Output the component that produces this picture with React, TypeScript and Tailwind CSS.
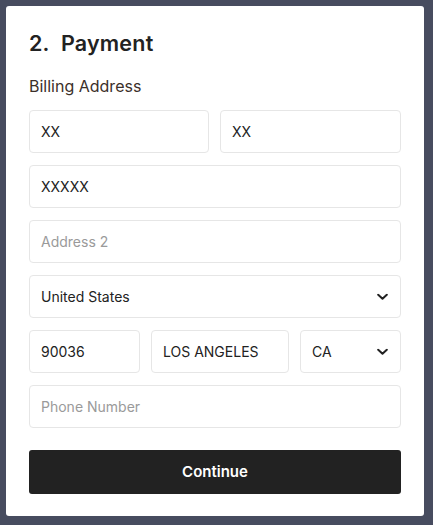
import React from "react";

function Chevron() {
  return (
    <svg width="11" height="7" viewBox="0 0 11 7" className="absolute right-[12px] top-1/2 -translate-y-1/2">
      <path d="M1.2 1.2 L5.5 5.3 L9.8 1.2" fill="none" stroke="#222" strokeWidth="2" strokeLinecap="round" strokeLinejoin="round" />
    </svg>
  );
}

function Field({ value, placeholder, select, className = "" }: { value?: string; placeholder?: string; select?: boolean; className?: string }) {
  return (
    <div className={`relative h-[43px] border border-[#e6e6e6] rounded-[4px] bg-white flex items-center pl-[11px] text-[14px] ${className}`}>
      {value ? (
        <span className="text-[#222]">{value}</span>
      ) : (
        <span className="text-[#9a9a9a]">{placeholder}</span>
      )}
      {select && <Chevron />}
    </div>
  );
}

export default function App() {
  return (
    <div className="min-h-[525px] w-[433px] bg-[#474c5f] p-[6px] pr-[9px]" style={{ fontFamily: "Inter, 'Liberation Sans', sans-serif" }}>
      <div className="bg-white rounded-[3px] px-[23px] pt-[24px] pb-[23px] h-[510px]">
        <h1 className="text-[21.5px] font-semibold text-[#222] leading-[26px] tracking-[0.2px]">
          2.&nbsp; Payment
        </h1>
        <div className="mt-[20px] text-[16px] text-[#3b2f2a] leading-[20px]">Billing Address</div>
        <div className="mt-[14px] flex flex-col gap-[12px]">
          <div className="flex gap-[11px]">
            <Field value="XX" className="w-[180px]" />
            <Field value="XX" className="flex-1" />
          </div>
          <Field value="XXXXX" />
          <Field placeholder="Address 2" />
          <Field value="United States" select />
          <div className="flex gap-[11px]">
            <Field value="90036" className="w-[111px]" />
            <Field value="LOS ANGELES" className="w-[138px]" />
            <Field value="CA" select className="flex-1" />
          </div>
          <Field placeholder="Phone Number" />
        </div>
        <button className="mt-[22px] w-full h-[44px] bg-[#222222] rounded-[3px] text-white text-[15px] font-semibold">
          Continue
        </button>
      </div>
    </div>
  );
}
